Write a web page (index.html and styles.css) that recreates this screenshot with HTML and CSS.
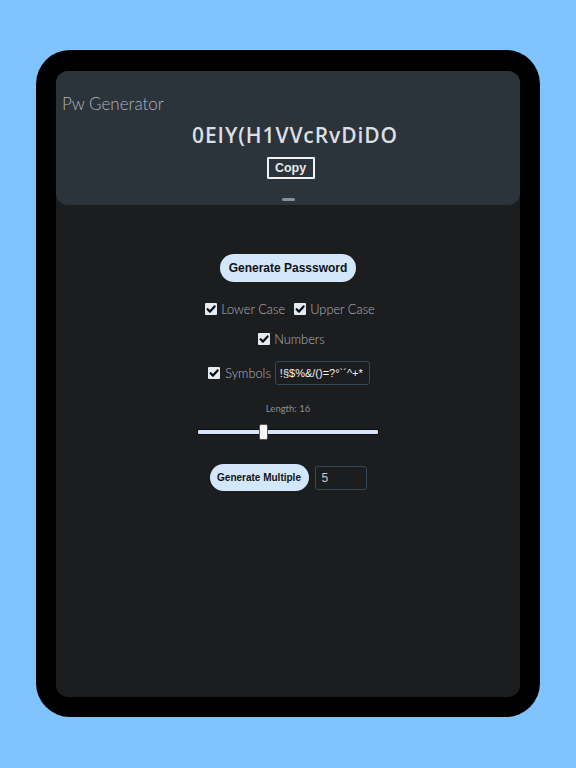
FILE: index.html
```html
<!DOCTYPE html>
<html lang="en">
<head>
    <meta charset="UTF-8">
    <meta name="viewport" content="width=device-width, initial-scale=1.0">
    <title>Pw Generator</title>
    <link rel="stylesheet" href="styles.css">
</head>
<body>
    <div class="device">
        <div class="screen">

            <div class="header">
                <div class="app-title">Pw Generator</div>
                <div class="password">0EIY(H1VVcRvDiDO</div>
                <button class="copy-button">Copy</button>
                <span class="handle"></span>
            </div>

            <div class="content">
                <button class="pill-button generate-button">Generate Passsword</button>

                <div class="option-row row-first">
                    <label class="option">
                        <span class="check"><svg viewBox="0 0 12 12"><path d="M2.6 6.2 L5 8.6 L9.6 3.4" /></svg></span>
                        <span class="option-text">Lower Case</span>
                    </label>
                    <label class="option">
                        <span class="check"><svg viewBox="0 0 12 12"><path d="M2.6 6.2 L5 8.6 L9.6 3.4" /></svg></span>
                        <span class="option-text">Upper Case</span>
                    </label>
                </div>

                <div class="option-row row-second">
                    <label class="option">
                        <span class="check"><svg viewBox="0 0 12 12"><path d="M2.6 6.2 L5 8.6 L9.6 3.4" /></svg></span>
                        <span class="option-text">Numbers</span>
                    </label>
                </div>

                <div class="option-row row-third">
                    <label class="option">
                        <span class="check"><svg viewBox="0 0 12 12"><path d="M2.6 6.2 L5 8.6 L9.6 3.4" /></svg></span>
                        <span class="option-text">Symbols</span>
                    </label>
                    <input type="text" class="text-field symbols-field" value="!§$%&amp;/()=?°`´^+*">
                </div>

                <div class="length-label">Length: 16</div>
                <input type="range" class="length-slider" min="6" max="34" value="16">

                <div class="multiple-row">
                    <button class="pill-button multiple-button">Generate Multiple</button>
                    <input type="text" class="text-field count-field" value="5">
                </div>
            </div>

        </div>
    </div>
</body>
</html>
```

FILE: styles.css
```css
* {
    margin: 0;
    padding: 0;
    box-sizing: border-box;
}

body {
    background-color: #80c4ff;
    font-family: "Lato", "Liberation Sans", sans-serif;
    color: #c9ced3;
}

.device {
    width: 504px;
    height: 667px;
    margin: 50px auto 0;
    padding: 21px 20px 20px;
    background-color: #000;
    border-radius: 34px;
}

.screen {
    height: 100%;
    background-color: #1c1d1f;
    border-radius: 12px;
    overflow: hidden;
}

.header {
    height: 134px;
    padding-top: 23px;
    background-color: #2b333b;
    border-radius: 0 0 12px 12px;
    display: flex;
    flex-direction: column;
    align-items: center;
}

.app-title {
    align-self: flex-start;
    padding-left: 6px;
    font-size: 17px;
    font-weight: 300;
    line-height: 20px;
    color: #aeb4b9;
}

.password {
    margin-top: 8px;
    margin-left: 14px;
    font-family: "Open Sans", "Lato", sans-serif;
    font-size: 21px;
    font-weight: 600;
    line-height: 26px;
    letter-spacing: 0.9px;
    color: #dcdfe2;
}

.copy-button {
    margin-top: 9px;
    margin-left: 5px;
    width: 48px;
    height: 22px;
    background: none;
    border: 2px solid #f2f4f6;
    border-radius: 1px;
    font-family: "Liberation Sans", Arial, sans-serif;
    font-size: 12.5px;
    font-weight: 700;
    color: #e8eaec;
}

.handle {
    margin-top: 19px;
    width: 13px;
    height: 3px;
    border-radius: 2px;
    background-color: #8a9097;
}

.content {
    padding-top: 49px;
    display: flex;
    flex-direction: column;
    align-items: center;
}

.pill-button {
    background-color: #d3e7fb;
    border: none;
    font-family: "Liberation Sans", Arial, sans-serif;
    font-weight: 700;
    color: #111;
}

.generate-button {
    width: 136px;
    height: 28px;
    border-radius: 14px;
    font-size: 12px;
}

.option-row {
    display: flex;
    align-items: center;
    gap: 9px;
}

.row-first {
    margin-top: 18px;
    margin-left: 4px;
}

.row-second {
    margin-top: 12px;
    margin-left: 7px;
}

.row-third {
    margin-top: 13px;
    margin-left: 2px;
    gap: 4px;
}

.option {
    display: flex;
    align-items: center;
    gap: 4px;
    height: 18px;
}

.row-third .option {
    gap: 5px;
}

.check {
    width: 12px;
    height: 12px;
    background-color: #e3ecf5;
    border-radius: 1px;
    display: flex;
}

.check svg {
    width: 12px;
    height: 12px;
    fill: none;
    stroke: #0c0c0c;
    stroke-width: 2.2;
    stroke-linecap: round;
    stroke-linejoin: round;
}

.option-text {
    font-size: 12.8px;
    font-weight: 300;
    color: #b1b7bd;
}

.text-field {
    height: 24px;
    background-color: transparent;
    border: 1px solid #34495a;
    border-radius: 3px;
    font-family: "Liberation Sans", Arial, sans-serif;
    font-size: 11px;
    color: #f2f4f6;
    padding: 0 4px;
}

.symbols-field {
    width: 95px;
}

.count-field {
    width: 52px;
    padding: 0 6px;
    font-size: 12px;
    color: #c9ced3;
}

.length-label {
    margin-top: 18px;
    font-size: 9.5px;
    line-height: 12px;
    color: #8b9095;
}

.length-slider {
    margin-top: 9px;
    width: 182px;
    height: 16px;
    -webkit-appearance: none;
    appearance: none;
    background: transparent;
}

.length-slider::-webkit-slider-runnable-track {
    height: 6px;
    background-color: #d6e6f6;
    border: 1px solid #0d0e0f;
    border-radius: 2px;
}

.length-slider::-webkit-slider-thumb {
    -webkit-appearance: none;
    width: 9px;
    height: 16px;
    margin-top: -6px;
    background-color: #fafafa;
    border: 1px solid #555;
    border-radius: 2px;
}

.multiple-row {
    margin-top: 24px;
    display: flex;
    align-items: center;
    gap: 6px;
}

.multiple-button {
    width: 99px;
    height: 27px;
    border-radius: 14px;
    font-size: 10px;
}
```
